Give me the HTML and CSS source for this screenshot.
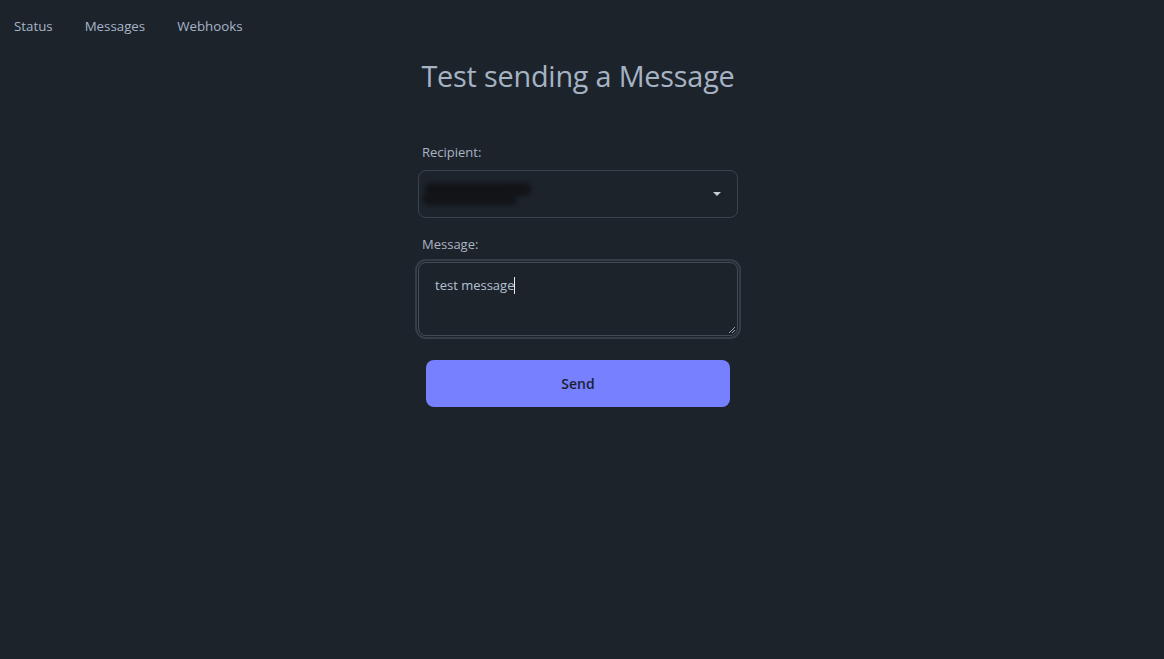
FILE: index.html
```html
<!DOCTYPE html>
<html>
<head>
<meta charset="utf-8">
<link rel="stylesheet" href="styles.css">
</head>
<body>
<nav class="nav">
  <a class="nav-link">Status</a>
  <a class="nav-link">Messages</a>
  <a class="nav-link">Webhooks</a>
</nav>
<div class="page">
  <main class="form-wrap">
    <h1 class="title">Test sending a Message</h1>
    <label class="label">Recipient:</label>
    <div class="select">
      <div class="redact">
        <span class="blob blob-a"></span>
        <span class="blob blob-b"></span>
      </div>
      <span class="caret"></span>
    </div>
    <label class="label label-msg">Message:</label>
    <div class="textarea">
      <span class="msg-text">test message</span><span class="cursor"></span>
      <svg class="grip" width="8" height="8" viewBox="0 0 8 8"><path d="M7 1 L1 7 M7 4 L4 7" stroke="#9aa3ad" stroke-width="1"/></svg>
    </div>
    <button class="send">Send</button>
  </main>
</div>
</body>
</html>
```
FILE: styles.css
```css
html, body {
  margin: 0;
  padding: 0;
  background: #1d232b;
  height: 100%;
}
body {
  font-family: "Open Sans", "Noto Sans", sans-serif;
  color: #aab6c6;
}
.nav {
  display: flex;
  gap: 32px;
  padding: 15px 0 0 14px;
  height: 22px;
}
.nav-link {
  font-size: 13.3px;
  color: #a6b5c8;
  line-height: 22px;
}
.page {
  display: flex;
  justify-content: center;
  padding-right: 8px;
}
.form-wrap {
  width: 320px;
  display: flex;
  flex-direction: column;
}
.title {
  margin: 19px 0 0 0;
  font-size: 28.8px;
  font-weight: 400;
  line-height: 40px;
  color: #a5b3c4;
  text-align: center;
  letter-spacing: -0.2px;
}
.label {
  font-size: 13px;
  color: #aab4c2;
  margin: 47px 0 0 4px;
  line-height: 18px;
}
.label-msg {
  margin-top: 17px;
}
.select {
  margin-top: 9px;
  height: 46px;
  border: 1px solid #3a424c;
  border-radius: 8px;
  display: flex;
  align-items: center;
  justify-content: space-between;
  padding: 0 16px 0 4px;
  position: relative;
}
.redact {
  position: relative;
  width: 110px;
  height: 26px;
}
.blob {
  position: absolute;
  background: #121417;
  filter: blur(2px);
  border-radius: 6px;
}
.blob-a {
  left: 2px; top: 2px; width: 106px; height: 13px;
}
.blob-b {
  left: 0; top: 12px; width: 94px; height: 12px;
}
.caret {
  width: 0;
  height: 0;
  border-left: 4px solid transparent;
  border-right: 4px solid transparent;
  border-top: 4px solid #c8ced6;
}
.textarea {
  margin-top: 9px;
  height: 59px;
  border: 1px solid #434b56;
  border-radius: 8px;
  box-shadow: 0 0 0 1px #1d232b, 0 0 0 3px #363d47;
  padding: 13px 16px 0 16px;
  font-size: 13px;
  line-height: 18px;
  color: #b3c0d2;
  position: relative;
}
.cursor {
  display: inline-block;
  width: 1px;
  height: 17px;
  background: #e6e9ee;
  vertical-align: -4px;
}
.grip {
  position: absolute;
  right: 1px;
  bottom: 1px;
}
.send {
  margin: 24px 8px 0 8px;
  height: 47px;
  border: none;
  border-radius: 8px;
  background: #7780ff;
  color: #1d2030;
  font-family: "Open Sans", "Noto Sans", sans-serif;
  font-size: 14px;
  font-weight: 600;
}
```
